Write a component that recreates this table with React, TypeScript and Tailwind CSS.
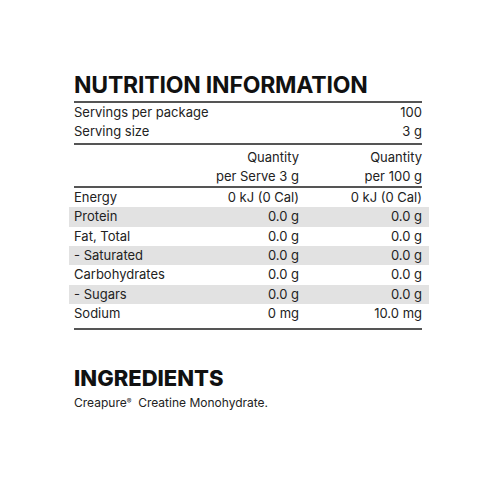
const rows = [
  { name: "Energy", serve: "0 kJ (0 Cal)", per100: "0 kJ (0 Cal)", shade: false },
  { name: "Protein", serve: "0.0 g", per100: "0.0 g", shade: true },
  { name: "Fat, Total", serve: "0.0 g", per100: "0.0 g", shade: false },
  { name: "- Saturated", serve: "0.0 g", per100: "0.0 g", shade: true },
  { name: "Carbohydrates", serve: "0.0 g", per100: "0.0 g", shade: false },
  { name: "- Sugars", serve: "0.0 g", per100: "0.0 g", shade: true },
  { name: "Sodium", serve: "0 mg", per100: "10.0 mg", shade: false },
];

export default function App() {
  return (
    <div className="w-[500px] h-[500px] bg-white font-['Inter',sans-serif] text-[#222]">
      <div className="w-[348px] ml-[74px] pt-[72px]">
        <h1 className="text-[23px] leading-[26px] font-bold tracking-[-0.2px] text-[#111]">
          NUTRITION INFORMATION
        </h1>
        <div className="mt-[3px] border-t-2 border-[#555]" />

        <div className="text-[13px]">
          <div className="flex justify-between h-[19px] items-center">
            <span>Servings per package</span>
            <span>100</span>
          </div>
          <div className="flex justify-between h-[19px] items-center">
            <span>Serving size</span>
            <span>3 g</span>
          </div>
        </div>
        <div className="mt-[2px] border-t-2 border-[#555]" />

        <div className="grid grid-cols-[105px_120px_1fr] text-[13px] pt-[3px]">
          <span />
          <span className="text-right h-[19px] leading-[19px]">Quantity</span>
          <span className="text-right h-[19px] leading-[19px]">Quantity</span>
          <span />
          <span className="text-right h-[19px] leading-[19px]">per Serve 3 g</span>
          <span className="text-right h-[19px] leading-[19px]">per 100 g</span>
        </div>
        <div className="border-t-2 border-[#555]" />

        <div className="text-[13px]">
          {rows.map((r) => (
            <div
              key={r.name}
              className={`grid grid-cols-[105px_120px_1fr] h-[19.33px] items-center -ml-[5px] -mr-[7px] pl-[5px] pr-[7px] ${r.shade ? "bg-[#e2e2e2]" : ""}`}
            >
              <span>{r.name}</span>
              <span className="text-right">{r.serve}</span>
              <span className="text-right">{r.per100}</span>
            </div>
          ))}
        </div>
        <div className="mt-[5px] border-t-2 border-[#555]" />

        <h2 className="mt-[35px] text-[22px] leading-[26px] font-extrabold text-[#111]">
          INGREDIENTS
        </h2>
        <p className="mt-[4px] text-[12px] leading-[16px]">
          Creapure<sup className="text-[7px]">®</sup>&nbsp; Creatine Monohydrate.
        </p>
      </div>
    </div>
  );
}
